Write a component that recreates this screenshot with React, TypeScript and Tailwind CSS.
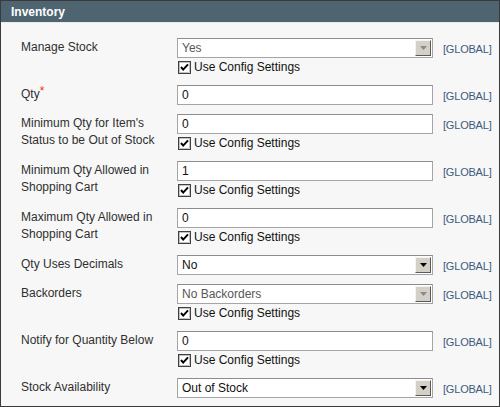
import React from 'react'

type Row = {
  label: React.ReactNode
  kind: 'select' | 'input'
  value: string
  disabled?: boolean
  config?: boolean
}

const rows: Row[] = [
  { label: 'Manage Stock', kind: 'select', value: 'Yes', disabled: true, config: true },
  { label: <>Qty<span className="text-[#eb340a] relative -top-[3px]">*</span></>, kind: 'input', value: '0' },
  { label: "Minimum Qty for Item's Status to be Out of Stock", kind: 'input', value: '0', config: true },
  { label: 'Minimum Qty Allowed in Shopping Cart', kind: 'input', value: '1', config: true },
  { label: 'Maximum Qty Allowed in Shopping Cart', kind: 'input', value: '0', config: true },
  { label: 'Qty Uses Decimals', kind: 'select', value: 'No' },
  { label: 'Backorders', kind: 'select', value: 'No Backorders', disabled: true, config: true },
  { label: 'Notify for Quantity Below', kind: 'input', value: '0', config: true },
  { label: 'Stock Availability', kind: 'select', value: 'Out of Stock' },
]

function Arrow({ disabled }: { disabled?: boolean }) {
  return (
    <div className="w-[16px] h-[16px] bg-[#d4d0c8] border border-t-[#f4f3ef] border-l-[#f4f3ef] border-r-[#5a5a5a] border-b-[#5a5a5a] flex items-center justify-center">
      <svg width="7" height="4" viewBox="0 0 7 4">
        <polygon points="0,0 7,0 3.5,4" fill={disabled ? '#8a8a8a' : '#000'} />
      </svg>
    </div>
  )
}

function Check() {
  return (
    <svg width="13" height="13" viewBox="0 0 13 13" className="shrink-0">
      <rect x="0.5" y="0.5" width="12" height="12" fill="#fff" stroke="#404040" />
      <rect x="1.5" y="1.5" width="10" height="10" fill="none" stroke="#9a9a9a" strokeWidth="0.6" />
      <path d="M3 6 L5.2 8.6 L10 3.4" fill="none" stroke="#000" strokeWidth="2" />
    </svg>
  )
}

export default function App() {
  return (
    <div
      className="w-[500px] h-[407px] bg-[#f7f7f7] border border-[#3a3a3a] overflow-hidden text-[12px] text-[#2f2f2f]"
      style={{ fontFamily: '"Liberation Sans", Arial, sans-serif' }}
    >
      <div className="h-[22px] bg-[#4e6470] border-b border-[#e8eaeb] pl-[10px] flex items-center">
        <span className="text-white font-bold text-[12px]">Inventory</span>
      </div>
      <div className="pt-[15px] pl-[20px]">
        {rows.map((r, i) => (
          <div key={i} className="flex pb-[9px]">
            <div className="w-[156px] pr-[6px] pt-[1px] leading-[17px]">{r.label}</div>
            <div className="w-[256px]">
              {r.kind === 'select' ? (
                <div className="h-[20px] bg-white border border-[#a5a5a5] border-t-[#8c8c8c] flex items-center justify-between pl-[4px] pr-[1px]">
                  <span className={r.disabled ? 'text-[#575757]' : 'text-[#111]'}>{r.value}</span>
                  <Arrow disabled={r.disabled} />
                </div>
              ) : (
                <div className="h-[20px] bg-white border border-[#a5a5a5] border-t-[#8c8c8c] flex items-center pl-[4px] text-[#111]">
                  {r.value}
                </div>
              )}
              {r.config && (
                <div className="h-[18px] flex items-center gap-[3px] pl-[1px]">
                  <Check />
                  <span className="text-[#111]">Use Config Settings</span>
                </div>
              )}
            </div>
            <div className="pl-[10px] pt-[3px] text-[11px] tracking-[-0.2px] text-[#3d5a7c]">[GLOBAL]</div>
          </div>
        ))}
      </div>
    </div>
  )
}
